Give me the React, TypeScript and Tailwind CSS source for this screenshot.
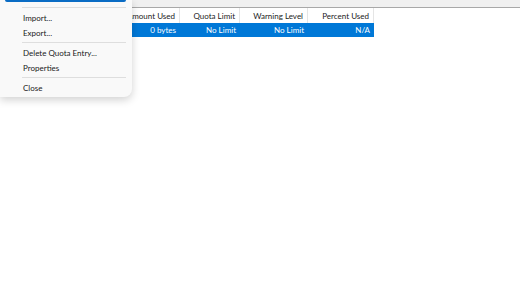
import React from "react";

export default function App() {
  const cols = [
    { label: "Logon Name", w: 110, v: "" },
    { label: "Amount Used", w: 70, v: "0 bytes" },
    { label: "Quota Limit", w: 60, v: "No Limit" },
    { label: "Warning Level", w: 68, v: "No Limit" },
    { label: "Percent Used", w: 66, v: "N/A" },
  ];
  return (
    <div
      className="relative w-[520px] h-[293px] bg-white overflow-hidden text-[8px] text-[#1a1a1a]"
      style={{ fontFamily: 'Lato, "Noto Sans", sans-serif' }}
    >
      <div className="h-[7px] bg-[#f0f0f0]" />
      <div className="h-px bg-[#a8a8a8]" />
      <div className="flex h-[15px]">
        {cols.map((c) => (
          <div
            key={c.label}
            style={{ width: c.w }}
            className="flex items-center justify-end pr-[4px] border-r border-[#e5e5e5] leading-none whitespace-nowrap"
          >
            {c.label}
          </div>
        ))}
      </div>
      <div className="flex h-[14px] bg-[#0078d7] text-white w-[374px]">
        {cols.map((c) => (
          <div
            key={c.label}
            style={{ width: c.w }}
            className="flex items-center justify-end pr-[4px] leading-none whitespace-nowrap"
          >
            {c.v}
          </div>
        ))}
      </div>

      <div className="absolute left-0 top-0 w-[132px] h-[97px] bg-[#f9f9f9] rounded-br-[8px] shadow-[0_3px_8px_rgba(0,0,0,0.18)]">
        <div className="ml-[5px] w-[121px] h-[2px] bg-[#0a6cc4] rounded-b-[2px]" />
        <div className="mt-[5px] ml-[22px] w-[104px] h-px bg-[#dedede]" />
        <div className="pl-[23px] mt-[2px]">
          <div className="h-[15px] flex items-center">Import...</div>
          <div className="h-[15px] flex items-center">Export...</div>
        </div>
        <div className="mt-[2px] ml-[22px] w-[104px] h-px bg-[#dedede]" />
        <div className="pl-[23px] mt-[2px]">
          <div className="h-[15px] flex items-center">Delete Quota Entry...</div>
          <div className="h-[15px] flex items-center">Properties</div>
        </div>
        <div className="mt-[2px] ml-[22px] w-[104px] h-px bg-[#dedede]" />
        <div className="pl-[23px] mt-[2px]">
          <div className="h-[16px] flex items-center">Close</div>
        </div>
      </div>
    </div>
  );
}
